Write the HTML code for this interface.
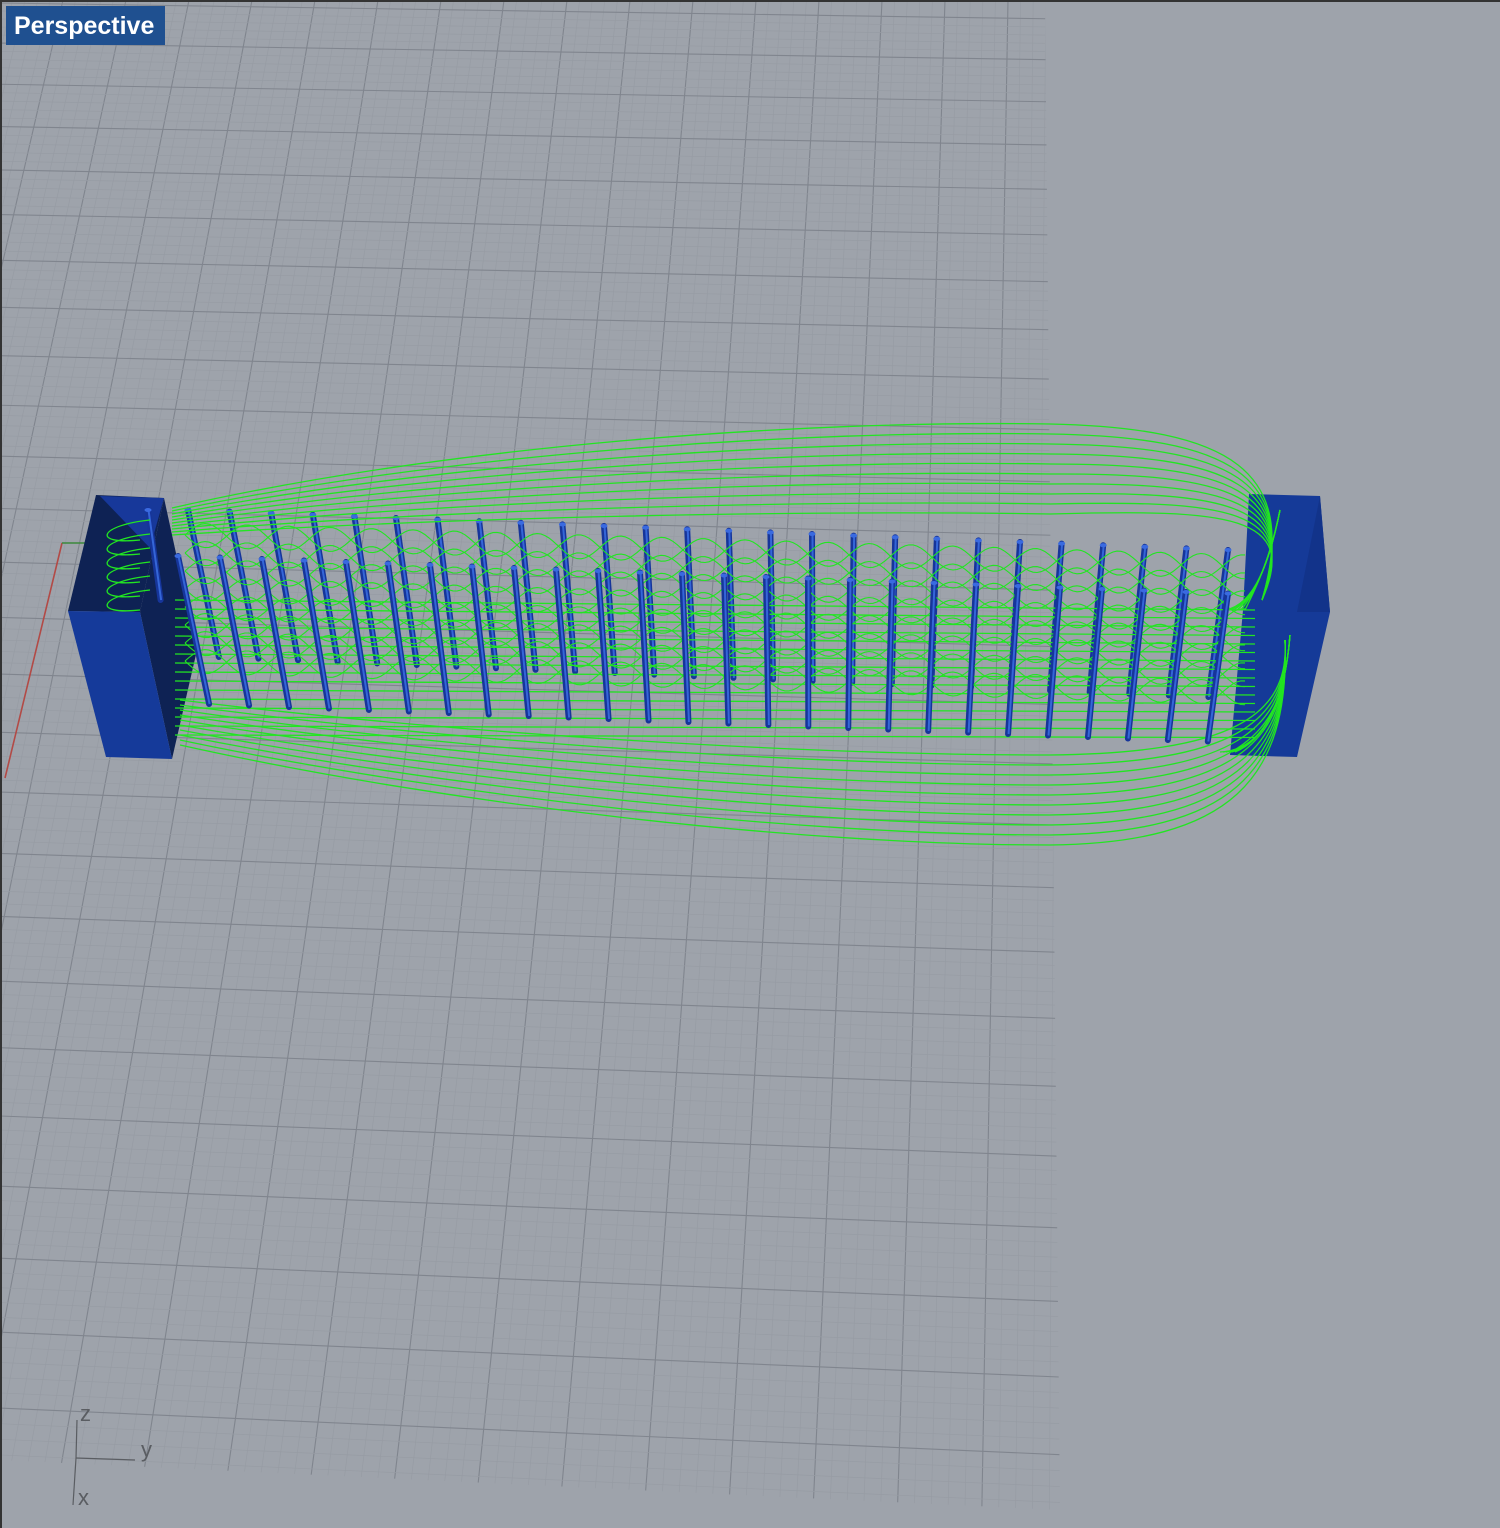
<!DOCTYPE html>
<html><head><meta charset="utf-8"><style>
html,body{margin:0;padding:0;background:#9ea3ab;width:1500px;height:1528px;overflow:hidden;position:relative}
svg{position:absolute;left:0;top:0;overflow:hidden}
.lbl{position:absolute;left:6px;top:6px;width:159px;height:39px;background:#1f5090;color:#fff;font:bold 25px "Liberation Sans",sans-serif;line-height:41px;text-indent:8px}
.ax{position:absolute;font:22px "Liberation Sans",sans-serif;color:#5a5d62;line-height:24px}
</style></head><body>
<svg id="s" width="1500" height="1528" viewBox="0 0 1500 1528" xmlns="http://www.w3.org/2000/svg">
<defs><clipPath id="gc"><polygon points="0,0 1045,0 1060,1510 0,1460"/></clipPath></defs>
<rect x="0" y="0" width="1500" height="1528" fill="#9ea3ab"/>
<g id="grid" clip-path="url(#gc)"></g>
<line x1="62" y1="543" x2="5" y2="778" stroke="#b24a46" stroke-width="1.6"/>
<line x1="62" y1="543" x2="92" y2="543" stroke="#3c8a3c" stroke-width="1.6"/>
<polygon points="96,495 164,498 140,612 68,611" fill="#0e2254"/>
<polygon points="100,496 164,498 150,548" fill="#17389a"/>
<polygon points="164,498 197,650 172,759 140,612" fill="#0e2254"/>
<polygon points="68,611 140,612 172,759 106,757" fill="#153a9a"/>
<polygon points="1249,494 1320,496 1330,612 1297,757 1230,755 1243,610" fill="#153a98"/>
<polygon points="1320,496 1330,612 1297,612" fill="#12338a"/>
<g id="back"></g>
<g id="green" fill="none" stroke="#22e522" stroke-width="1.3"></g>
<g id="front"></g>
<rect x="0" y="0" width="1500" height="2" fill="#333"/>
<rect x="0" y="0" width="2" height="1528" fill="#333"/>
<line x1="77" y1="1420" x2="76" y2="1458" stroke="#5a5d62" stroke-width="1.2"/>
<line x1="76" y1="1458" x2="135" y2="1460" stroke="#5a5d62" stroke-width="1.2"/>
<line x1="76" y1="1458" x2="73" y2="1505" stroke="#5a5d62" stroke-width="1.2"/>
</svg>
<div class="lbl">Perspective</div>
<div class="ax" style="left:80px;top:1402px">z</div>
<div class="ax" style="left:141px;top:1438px">y</div>
<div class="ax" style="left:78px;top:1486px">x</div>
<script>
var NS="http://www.w3.org/2000/svg";
function el(p,t,a){var e=document.createElementNS(NS,t);for(var k in a)e.setAttribute(k,a[k]);p.appendChild(e);return e;}
var g=document.getElementById('grid');
var H=4444,xv=1085;
for(var k=-20;k<=20;k++){
  for(var m=0;m<5;m++){
    var x0=k*63+m*12.6;
    var xb=xv+(x0-xv)*(1600+H)/H;
    el(g,'line',{x1:x0,y1:0,x2:xb,y2:1600,stroke:m==0?'#80858e':'#979ca4','stroke-width':m==0?1.1:0.7});
  }
}
var y=3;
while(y<1600){
  var s=40+0.027*y;
  for(var m=0;m<5;m++){
    var yy=y+m*s/5;
    var sl=0.015+0.03*yy/1460;
    el(g,'line',{x1:0,y1:yy,x2:1100,y2:yy+sl*1100,stroke:m==0?'#80858e':'#979ca4','stroke-width':m==0?1.1:0.7});
  }
  y+=s;
}
function post(par,x,y,len,lean){
  var xb=x+lean*len,yb=y+len;
  el(par,'line',{x1:x,y1:y,x2:xb,y2:yb,stroke:'#16359a','stroke-width':6,'stroke-linecap':'round'});
  el(par,'line',{x1:x+0.5,y1:y,x2:xb+0.5,y2:yb,stroke:'#3566d8','stroke-width':2});
  el(par,'ellipse',{cx:x,cy:y,rx:3.5,ry:2,fill:'#3a6ae0'});
}
var back=document.getElementById('back'),front=document.getElementById('front');
post(back,148,510,90,0.14);
for(var i=0;i<26;i++){var x=188+i*41.6;var ln=0.21-0.33*(x-188)/1000;post(back,x,510+i*1.6,147,ln);}
var gr=document.getElementById('green');
for(var i=0;i<10;i++){var d=i*10;
 el(gr,'path',{d:'M172,'+(508+i*3)+' C450,'+(445+d*0.8)+' 800,'+(420+d)+' 1050,'+(424+d)+' C1230,'+(428+d*0.9)+' 1300,'+(470+d*0.5)+' 1262,600'});
 el(gr,'path',{d:'M180,'+(745-i*5)+' C450,'+(805-d*0.8)+' 800,'+(845-d)+' 1050,'+(845-d)+' C1230,'+(843-d)+' 1290,'+(780-d*0.7)+' 1285,640'});
}
for(var j=0;j<16;j++){
 el(gr,'line',{x1:175,y1:600+j*9,x2:1255,y2:610+j*8.5});
}
for(var j=0;j<8;j++){
 for(var ph=0;ph<2;ph++){
  var pts=[];
  for(var x=185;x<=1245;x+=4){
   var yb=535+j*18+0.03*(x-185);
   pts.push(x+','+(yb+12*Math.sin(2*Math.PI*(x-185)/83+ph*Math.PI)).toFixed(1));
  }
  el(gr,'polyline',{points:pts.join(' '),'stroke-width':1.1});
 }
}
for(var j=0;j<6;j++){
 el(gr,'path',{d:'M150,'+(520+j*14)+' C100,'+(525+j*14)+' 90,'+(545+j*14)+' 140,'+(540+j*14)});
}
for(var j=0;j<6;j++){
 el(gr,'path',{d:'M1280,510 C1270,560 1255,'+(590+j*3)+' '+(1245-j*4)+',610'});
 el(gr,'path',{d:'M1290,635 C1285,700 1265,'+(740+j*2)+' '+(1235-j*3)+',752'});
}
for(var i=0;i<26;i++){var x=178+i*42;var ln=0.21-0.33*(x-178)/1000;post(front,x,556+i*1.5,148,ln);}
</script>
</body></html>
